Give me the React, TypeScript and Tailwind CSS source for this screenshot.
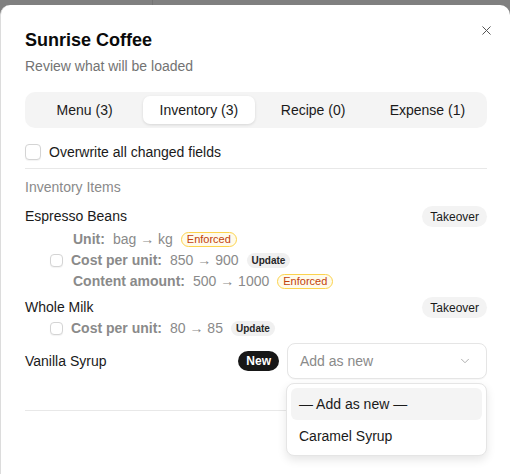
import React from "react";
import { X, ChevronDown } from "lucide-react";

const font = { fontFamily: '"Liberation Sans", Arial, sans-serif' };

function Check({ size = "w-[13px] h-[13px]" }: { size?: string }) {
  return <div className={`${size} shrink-0 rounded-[4px] border border-[#d4d4d4] bg-white shadow-[0_1px_1px_rgba(0,0,0,0.05)]`} />;
}

function Enforced() {
  return (
    <span className="inline-flex items-center h-[15px] px-[5px] rounded-full border border-[#fcd34d] bg-[#fffbeb] text-[11px] leading-none font-medium text-[#c2410c]">
      Enforced
    </span>
  );
}

function Update() {
  return (
    <span className="inline-flex items-center h-[15px] px-[5px] rounded-full bg-[#f0f0f0] text-[10px] leading-none font-bold text-[#262626]">
      Update
    </span>
  );
}

function Takeover() {
  return (
    <span className="inline-flex items-center h-[21px] px-[8px] rounded-full bg-[#f3f3f3] text-[12px] font-medium text-[#1a1a1a]">
      Takeover
    </span>
  );
}

function Field({ label, value }: { label: string; value: string }) {
  return (
    <span className="text-[14px] text-[#8a8a8a]">
      <span className="font-bold">{label}</span>
      <span className="ml-[8px]">{value}</span>
    </span>
  );
}

export default function App() {
  return (
    <div className="relative w-[510px] h-[474px] overflow-hidden bg-[#808080]" style={font}>
      <div className="absolute left-[152px] top-0 w-px h-[6px] bg-[#747474]" />
      <div className="absolute left-0 top-[5px] w-[510px] h-[480px] rounded-t-[10px] bg-white border-l border-[#dcdcdc] pl-[24px] pr-[23px] pt-[21px]">
        <button className="absolute right-[16px] top-[18px] text-[#555]">
          <X size={15} strokeWidth={1.6} />
        </button>
        <div className="text-[18px] leading-[28px] font-semibold text-[#0a0a0a]">Sunrise Coffee</div>
        <div className="mt-[2px] text-[14px] leading-[20px] text-[#737373]">Review what will be loaded</div>

        <div className="mt-[16px] h-[36px] rounded-[10px] bg-[#f4f4f4] p-[4px] flex gap-[3px]">
          {["Menu (3)", "Inventory (3)", "Recipe (0)", "Expense (1)"].map((t, i) => (
            <div
              key={t}
              className={`flex-1 flex items-center justify-center rounded-[7px] text-[14px] font-medium text-[#1a1a1a] ${
                i === 1 ? "bg-white shadow-[0_1px_3px_rgba(0,0,0,0.12)]" : ""
              }`}
            >
              {t}
            </div>
          ))}
        </div>

        <div className="mt-[14px] flex items-center gap-[8px] h-[20px]">
          <Check size="w-[16px] h-[16px]" />
          <span className="text-[14px] font-medium text-[#1a1a1a]">Overwrite all changed fields</span>
        </div>
        <div className="mt-[6px] h-px bg-[#e8e8e8]" />

        <div className="mt-[8px] text-[14px] leading-[20px] font-medium text-[#8a8a8a]">Inventory Items</div>

        <div className="mt-[9px] flex items-center justify-between h-[21px]">
          <span className="text-[14px] text-[#1a1a1a]">Espresso Beans</span>
          <Takeover />
        </div>
        <div className="mt-[2px] flex flex-col">
          <div className="h-[21px] flex items-center gap-[8px] pl-[48px]">
            <Field label="Unit:" value="bag → kg" />
            <Enforced />
          </div>
          <div className="h-[21px] flex items-center gap-[8px] pl-[25px]">
            <Check />
            <Field label="Cost per unit:" value="850 → 900" />
            <Update />
          </div>
          <div className="h-[21px] flex items-center gap-[8px] pl-[48px]">
            <Field label="Content amount:" value="500 → 1000" />
            <Enforced />
          </div>
        </div>

        <div className="mt-[5px] flex items-center justify-between h-[21px]">
          <span className="text-[14px] text-[#1a1a1a]">Whole Milk</span>
          <Takeover />
        </div>
        <div className="h-[21px] flex items-center gap-[8px] pl-[25px]">
          <Check />
          <Field label="Cost per unit:" value="80 → 85" />
          <Update />
        </div>

        <div className="relative mt-[4px] flex items-center h-[36px]">
          <span className="flex-1 text-[14px] text-[#1a1a1a]">Vanilla Syrup</span>
          <span className="inline-flex items-center h-[20px] px-[8px] rounded-full bg-[#171717] text-white text-[12px] font-bold mr-[8px]">
            New
          </span>
          <div className="w-[200px] h-[36px] rounded-[8px] border border-[#e5e5e5] bg-white flex items-center justify-between pl-[12px] pr-[14px] shadow-[0_1px_1px_rgba(0,0,0,0.03)]">
            <span className="text-[14px] text-[#8a8a8a]">Add as new</span>
            <ChevronDown size={14} className="text-[#a3a3a3]" strokeWidth={1.5} />
          </div>
        </div>

        <div className="mt-[31px] h-px bg-[#e8e8e8]" />

        <div className="absolute left-[285px] top-[378px] w-[201px] h-[73px] rounded-[8px] border border-[#e5e5e5] bg-white shadow-[0_4px_10px_rgba(0,0,0,0.10)] p-[4px]">
          <div className="h-[32px] rounded-[6px] bg-[#f4f4f4] flex items-center pl-[8px] text-[14px] text-[#1a1a1a]">
            — Add as new —
          </div>
          <div className="h-[32px] flex items-center pl-[8px] text-[14px] text-[#1a1a1a]">Caramel Syrup</div>
        </div>
      </div>
    </div>
  );
}
